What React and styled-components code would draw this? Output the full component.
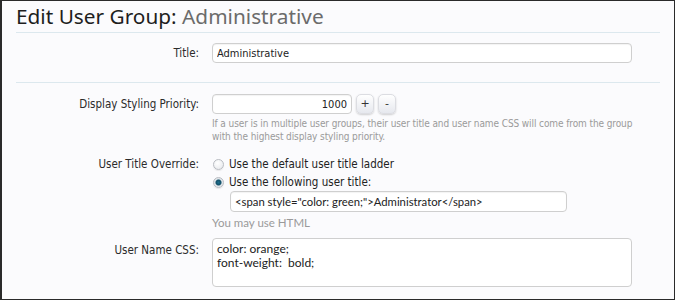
import React from 'react';
import styled, { createGlobalStyle } from 'styled-components';

const GlobalStyle = createGlobalStyle`
  html, body {
    margin: 0;
    padding: 0;
    background: #fbfbfd;
  }
  * {
    box-sizing: border-box;
  }
`;

const Frame = styled.div`
  width: 675px;
  height: 300px;
  overflow: hidden;
  border: 1px solid #2a2a2a;
  border-left-width: 2px;
  background: #fbfbfd;
  padding: 0 14px 0 14px;
  font-family: "DejaVu Sans Condensed", "DejaVu Sans", sans-serif;
  color: #2b2b2b;
`;

const Heading = styled.h1`
  margin: 0;
  height: 31px;
  padding-top: 2px;
  font-family: "Noto Sans", "Open Sans", sans-serif;
  font-weight: normal;
  font-size: 20.8px;
  line-height: 27px;
  color: #1e1e1e;

  span {
    color: #6b6b6b;
  }
`;

const Section = styled.div`
  border-top: 1px solid #dce8ee;
  padding: ${p => p.$pad || '10px 0 19px'};
  display: flex;
  flex-direction: column;
`;

const Row = styled.div`
  display: grid;
  grid-template-columns: 183px 1fr;
  column-gap: 13px;
  align-items: start;
  margin-top: ${p => p.$mt || '0'};
`;

const Label = styled.div`
  text-align: right;
  font-size: 11.5px;
  line-height: ${p => p.$lh || '20px'};
  color: #2b2b2b;
`;

const Controls = styled.div`
  display: flex;
  flex-direction: column;
  align-items: flex-start;
`;

const TextInput = styled.input`
  width: ${p => p.$w || '420px'};
  height: ${p => p.$h || '20px'};
  border: 1px solid #cfcfcf;
  border-radius: 4px;
  background: #fff;
  box-shadow: inset 0 1px 1px rgba(0, 0, 0, 0.05);
  padding: 0 4px;
  margin: ${p => p.$m || '0'};
  font-family: ${p => p.$alt ? '"Lato", "Open Sans", sans-serif' : '"DejaVu Sans Condensed", "DejaVu Sans", sans-serif'};
  font-size: ${p => p.$alt ? '11.3px' : '11px'};
  color: #222;
  text-align: ${p => p.$right ? 'right' : 'left'};
  outline: none;
`;

const SpinRow = styled.div`
  display: flex;
  align-items: center;
  gap: 4px;
`;

const SpinButton = styled.button`
  width: 18px;
  height: 20px;
  padding: 0;
  border: 1px solid #dcdde2;
  border-radius: 5px;
  background: linear-gradient(#ffffff, #e6e8ee);
  box-shadow: 0 1px 2px rgba(0, 0, 0, 0.18);
  font-family: "DejaVu Sans", sans-serif;
  font-size: 11px;
  line-height: 18px;
  color: #333;
`;

const Hint = styled.div`
  margin-top: ${p => p.$mt || '3px'};
  white-space: nowrap;
  font-family: ${p => p.$alt ? '"Lato", "Open Sans", sans-serif' : '"DejaVu Sans Condensed", "DejaVu Sans", sans-serif'};
  font-size: ${p => p.$alt ? '11.5px' : '10px'};
  letter-spacing: ${p => p.$alt ? '0' : '-0.1px'};
  line-height: 13px;
  color: #9a9a9a;
`;

const Option = styled.label`
  display: flex;
  align-items: center;
  gap: 5px;
  height: 18px;
  font-size: 11.5px;
  color: #222;
`;

const Radio = styled.span`
  width: 11px;
  height: 11px;
  margin-left: 1px;
  border-radius: 50%;
  border: 1px solid #b9bcc2;
  background: ${p => p.$checked
    ? 'radial-gradient(circle, #1d6f8c 0, #13506a 2.5px, #dde3e8 3.5px, #f2f4f6 100%)'
    : 'radial-gradient(circle at 40% 35%, #ffffff 0, #e4e6ea 100%)'};
  box-shadow: 0 1px 1px rgba(0, 0, 0, 0.08);
`;

const TextArea = styled.textarea`
  width: 420px;
  height: 49px;
  border: 1px solid #cfcfcf;
  border-radius: 4px;
  background: #fff;
  padding: 3px 4px;
  resize: none;
  font-family: "Lato", "Open Sans", sans-serif;
  font-size: 12px;
  line-height: 13.5px;
  color: #222;
  outline: none;
`;

export default function App() {
  return (
    <>
      <GlobalStyle />
      <Frame>
        <Heading>
          Edit User Group: <span>Administrative</span>
        </Heading>

        <Section>
          <Row>
            <Label>Title:</Label>
            <Controls>
              <TextInput defaultValue="Administrative" />
            </Controls>
          </Row>
        </Section>

        <Section $pad="11px 0 0">
          <Row>
            <Label>Display Styling Priority:</Label>
            <Controls>
              <SpinRow>
                <TextInput $w="140px" $right defaultValue="1000" />
                <SpinButton>+</SpinButton>
                <SpinButton>-</SpinButton>
              </SpinRow>
              <Hint>
                If a user is in multiple user groups, their user title and user name CSS will come from the group
                <br />
                with the highest display styling priority.
              </Hint>
            </Controls>
          </Row>

          <Row $mt="12px">
            <Label $lh="18px">User Title Override:</Label>
            <Controls>
              <Option>
                <Radio />
                Use the default user title ladder
              </Option>
              <Option>
                <Radio $checked />
                Use the following user title:
              </Option>
              <TextInput
                $w="337px"
                $h="21px"
                $alt
                $m="0 0 0 18px"
                defaultValue={'<span style="color: green;">Administrator</span>'}
              />
              <Hint $alt $mt="4px">You may use HTML</Hint>
            </Controls>
          </Row>

          <Row $mt="9px">
            <Label $lh="24px">User Name CSS:</Label>
            <Controls>
              <TextArea defaultValue={'color: orange;\nfont-weight:  bold;'} />
            </Controls>
          </Row>
        </Section>
      </Frame>
    </>
  );
}
